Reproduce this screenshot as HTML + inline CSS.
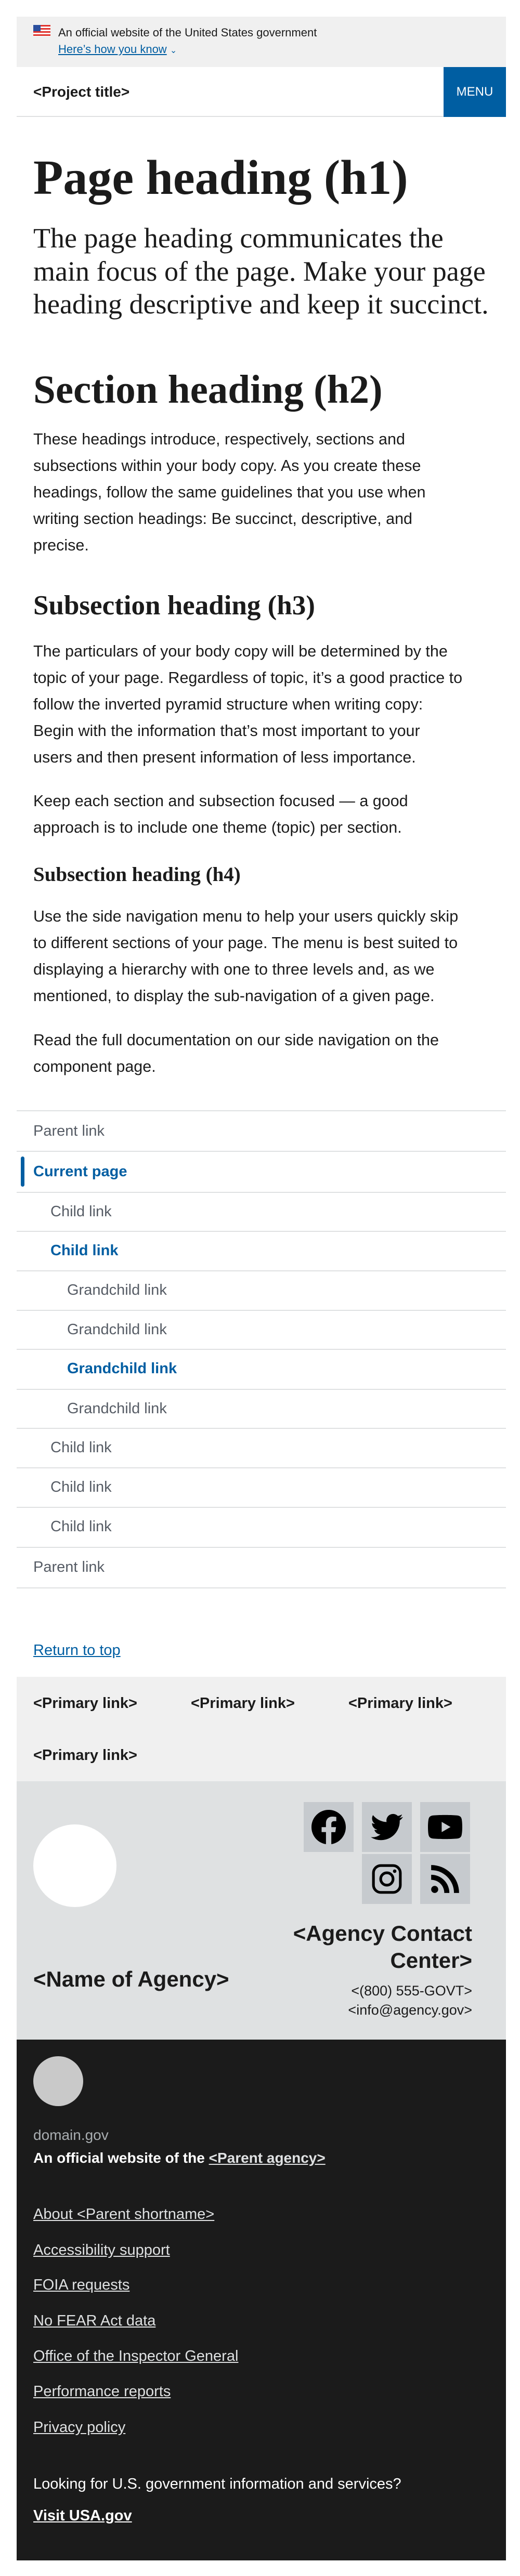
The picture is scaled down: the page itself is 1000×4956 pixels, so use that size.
<!DOCTYPE html>
<html><head><meta charset="utf-8"><style>
*{margin:0;padding:0;box-sizing:border-box}
html,body{width:1000px;height:4956px;background:#fff;overflow:hidden}
body{position:relative;font-family:"Liberation Sans",sans-serif;color:#1b1b1b}
.a{position:absolute;white-space:nowrap}
.bx{position:absolute}
.serif{font-family:"Liberation Serif",serif;font-weight:bold}
.p{font-size:30.5px;line-height:51px;left:64px}
.nav{position:absolute;left:32px;width:941px;border-top:2px solid #dfe1e2}
.nt{position:absolute;font-size:29px;color:#565c65;white-space:nowrap}
.blue{color:#005ea2}
.soc{position:absolute;width:96px;height:96px;background:#c6cace;display:flex;align-items:center;justify-content:center}
.fl{font-size:29px;color:#dfe1e2;text-decoration:underline;left:64px;line-height:40px}
</style></head><body>
<div class="bx" style="left:32px;top:32px;width:941px;height:97px;background:#f0f0f0"></div>
<svg class="bx" style="left:64px;top:48px" width="33" height="22" viewBox="0 0 33 22">
<rect width="33" height="22" fill="#fff"/>
<rect y="0" width="33" height="3" fill="#e0312b"/><rect y="6" width="33" height="3" fill="#e0312b"/><rect y="12" width="33" height="3" fill="#e0312b"/><rect y="18" width="33" height="3" fill="#e0312b"/>
<rect width="14" height="12" fill="#2b4f9e"/>
</svg>
<div class="a" style="left:112px;top:48px;font-size:22px;line-height:30px">An official website of the United States government</div>
<div class="a" style="left:112px;top:80px;font-size:22px;line-height:30px;color:#005ea2"><span style="text-decoration:underline">Here’s how you know</span> <span style="font-size:16px">&#8964;</span></div>
<div class="bx" style="left:32px;top:223px;width:821px;height:2px;background:#dfe1e2"></div>
<div class="bx" style="left:853px;top:129px;width:120px;height:96px;background:#005ea2;color:#fff;font-size:24px;line-height:96px;text-align:center">MENU</div>
<div class="a" style="left:64px;top:160px;font-size:28px;line-height:34px;font-weight:bold">&lt;Project title&gt;</div>
<div class="a serif" style="left:64px;top:287px;font-size:94px;line-height:110px">Page heading (h1)</div>
<div class="a" style="left:64px;top:427px;font-family:'Liberation Serif',serif;font-size:54px;line-height:63.5px">The page heading communicates the<br>main focus of the page. Make your page<br>heading descriptive and keep it succinct.</div>
<div class="a serif" style="left:64px;top:704px;font-size:77px;line-height:90px">Section heading (h2)</div>
<div class="a p" style="top:820px">These headings introduce, respectively, sections and<br>subsections within your body copy. As you create these<br>headings, follow the same guidelines that you use when<br>writing section headings: Be succinct, descriptive, and<br>precise.</div>
<div class="a serif" style="left:64px;top:1134px;font-size:53px;line-height:62px">Subsection heading (h3)</div>
<div class="a p" style="top:1228px">The particulars of your body copy will be determined by the<br>topic of your page. Regardless of topic, it’s a good practice to<br>follow the inverted pyramid structure when writing copy:<br>Begin with the information that’s most important to your<br>users and then present information of less importance.</div>
<div class="a p" style="top:1516px">Keep each section and subsection focused — a good<br>approach is to include one theme (topic) per section.</div>
<div class="a serif" style="left:64px;top:1659px;font-size:39px;line-height:48px">Subsection heading (h4)</div>
<div class="a p" style="top:1738px">Use the side navigation menu to help your users quickly skip<br>to different sections of your page. The menu is best suited to<br>displaying a hierarchy with one to three levels and, as we<br>mentioned, to display the sub-navigation of a given page.</div>
<div class="a p" style="top:1976px">Read the full documentation on our side navigation on the<br>component page.</div>
<div class="nav" style="top:2136px;height:79px"></div>
<div class="nav" style="top:2214px;height:80px"></div>
<div class="nav" style="top:2293px"></div>
<div class="nav" style="top:2368px"></div>
<div class="nav" style="top:2444px"></div>
<div class="nav" style="top:2520px"></div>
<div class="nav" style="top:2595px"></div>
<div class="nav" style="top:2672px"></div>
<div class="nav" style="top:2747px"></div>
<div class="nav" style="top:2823px"></div>
<div class="nav" style="top:2899px"></div>
<div class="nav" style="top:2976px"></div>
<div class="nav" style="top:3054px"></div>
<div class="bx" style="left:40px;top:2225px;width:7px;height:58px;background:#005ea2;border-radius:4px"></div>
<div class="nt" style="left:64px;top:2158px;line-height:36px">Parent link</div>
<div class="nt blue" style="left:64px;top:2236px;line-height:36px;font-weight:bold">Current page</div>
<div class="nt" style="left:97px;top:2313px;line-height:36px">Child link</div>
<div class="nt blue" style="left:97px;top:2388px;line-height:36px;font-weight:bold">Child link</div>
<div class="nt" style="left:129px;top:2464px;line-height:36px">Grandchild link</div>
<div class="nt" style="left:129px;top:2540px;line-height:36px">Grandchild link</div>
<div class="nt blue" style="left:129px;top:2615px;line-height:36px;font-weight:bold">Grandchild link</div>
<div class="nt" style="left:129px;top:2692px;line-height:36px">Grandchild link</div>
<div class="nt" style="left:97px;top:2767px;line-height:36px">Child link</div>
<div class="nt" style="left:97px;top:2843px;line-height:36px">Child link</div>
<div class="nt" style="left:97px;top:2919px;line-height:36px">Child link</div>
<div class="nt" style="left:64px;top:2997px;line-height:36px">Parent link</div>
<div class="a" style="left:64px;top:3157px;font-size:29px;line-height:36px;color:#005ea2;text-decoration:underline">Return to top</div>
<div class="bx" style="left:32px;top:3226px;width:941px;height:201px;background:#f0f0f0"></div>
<div class="a" style="left:64px;top:3259px;font-size:29px;line-height:36px;font-weight:bold">&lt;Primary link&gt;</div>
<div class="a" style="left:367px;top:3259px;font-size:29px;line-height:36px;font-weight:bold">&lt;Primary link&gt;</div>
<div class="a" style="left:670px;top:3259px;font-size:29px;line-height:36px;font-weight:bold">&lt;Primary link&gt;</div>
<div class="a" style="left:64px;top:3359px;font-size:29px;line-height:36px;font-weight:bold">&lt;Primary link&gt;</div>
<div class="bx" style="left:32px;top:3427px;width:941px;height:497px;background:#dfe1e2"></div>
<div class="bx" style="left:64px;top:3510px;width:160px;height:159px;border-radius:50%;background:#fff"></div>
<div class="soc" style="left:584px;top:3467px"><svg width="66" height="66" viewBox="0 0 24 24"><path d="M24 12.07C24 5.41 18.63 0 12 0S0 5.4 0 12.07C0 18.1 4.39 23.1 10.13 24v-8.44H7.08v-3.49h3.04V9.41c0-3.020 1.8-4.7 4.54-4.7 1.31 0 2.68.24 2.68.24v2.97h-1.5c-1.5 0-1.96.93-1.96 1.89v2.26h3.32l-.53 3.5h-2.8V24C19.62 23.1 24 18.1 24 12.07z"/></svg></div>
<div class="soc" style="left:696px;top:3467px"><svg width="62" height="62" viewBox="0 0 24 24"><path d="M23.95 4.57a10 10 0 0 1-2.82.77 4.96 4.96 0 0 0 2.16-2.72c-.95.56-2 .96-3.12 1.19a4.92 4.92 0 0 0-8.38 4.48A13.94 13.94 0 0 1 1.64 3.16a4.92 4.92 0 0 0 1.52 6.57 4.9 4.9 0 0 1-2.23-.61v.06a4.92 4.92 0 0 0 3.950 4.83 4.97 4.97 0 0 1-2.21.08 4.93 4.93 0 0 0 4.6 3.42A9.87 9.87 0 0 1 0 19.54a13.94 13.94 0 0 0 7.56 2.21c9.05 0 14-7.5 14-13.98 0-.21 0-.42-.02-.63A9.94 9.94 0 0 0 24 4.59z"/></svg></div>
<div class="soc" style="left:808px;top:3467px"><svg width="66" height="66" viewBox="0 0 24 24"><path d="M23.5 6.2a3 3 0 0 0-2.1-2.1C19.5 3.6 12 3.6 12 3.6s-7.5 0-9.4.5A3 3 0 0 0 .5 6.2C0 8.1 0 12 0 12s0 3.9.5 5.8a3 3 0 0 0 2.1 2.1c1.9.5 9.4.5 9.4.5s7.5 0 9.4-.5a3 3 0 0 0 2.1-2.1c.5-1.9.5-5.8.5-5.8s0-3.9-.5-5.8zM9.6 15.6V8.4l6.2 3.6-6.2 3.6z"/></svg></div>
<div class="soc" style="left:696px;top:3567px"><svg width="62" height="62" viewBox="0 0 24 24"><rect x="2" y="2" width="20" height="20" rx="5.5" fill="none" stroke="#000" stroke-width="2"/><circle cx="12" cy="12" r="4.6" fill="none" stroke="#000" stroke-width="2"/><circle cx="17.8" cy="6.2" r="1.3"/></svg></div>
<div class="soc" style="left:808px;top:3567px"><svg width="56" height="56" viewBox="0 0 24 24"><circle cx="3.4" cy="20.6" r="2.9"/><path d="M.5 8.5v4.2A10.8 10.8 0 0 1 11.3 23.5h4.2A15 15 0 0 0 .5 8.5zM.5.5v4.2A18.8 18.8 0 0 1 19.3 23.5h4.2A23 23 0 0 0 .5.5z"/></svg></div>
<div class="a" style="left:64px;top:3783px;font-size:42px;line-height:50px;font-weight:bold">&lt;Name of Agency&gt;</div>
<div class="a" style="right:92px;top:3694px;font-size:42px;line-height:52px;font-weight:bold;text-align:right">&lt;Agency Contact<br>Center&gt;</div>
<div class="a" style="right:92px;top:3812px;font-size:27px;line-height:37px;text-align:right">&lt;(800) 555-GOVT&gt;<br>&lt;info@agency.gov&gt;</div>
<div class="bx" style="left:32px;top:3924px;width:941px;height:1002px;background:#1b1b1b"></div>
<div class="bx" style="left:64px;top:3956px;width:96px;height:96px;border-radius:50%;background:#c9c9c9"></div>
<div class="a" style="left:64px;top:4090px;font-size:28px;line-height:36px;color:#a9aeb1">domain.gov</div>
<div class="a" style="left:64px;top:4134px;font-size:28px;line-height:36px;color:#fff;font-weight:bold">An official website of the <span style="text-decoration:underline;color:#dfe1e2">&lt;Parent agency&gt;</span></div>
<div class="a fl" style="top:4240px">About &lt;Parent shortname&gt;</div>
<div class="a fl" style="top:4309px">Accessibility support</div>
<div class="a fl" style="top:4376px">FOIA requests</div>
<div class="a fl" style="top:4445px">No FEAR Act data</div>
<div class="a fl" style="top:4513px">Office of the Inspector General</div>
<div class="a fl" style="top:4581px">Performance reports</div>
<div class="a fl" style="top:4650px">Privacy policy</div>
<div class="a" style="left:64px;top:4760px;font-size:29px;line-height:38px;color:#fff">Looking for U.S. government information and services?</div>
<div class="a" style="left:64px;top:4821px;font-size:29px;line-height:38px;color:#fff;font-weight:bold;text-decoration:underline">Visit USA.gov</div>
</body></html>
